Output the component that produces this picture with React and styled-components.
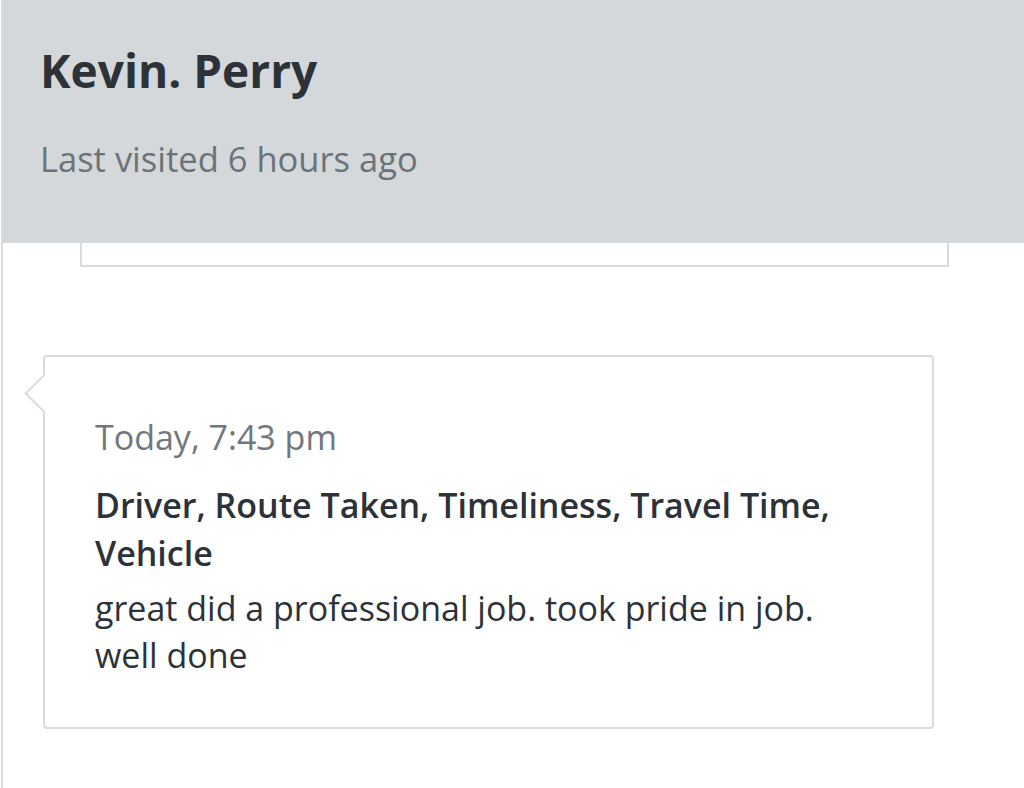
import styled, { createGlobalStyle } from 'styled-components'

const GlobalStyle = createGlobalStyle`
  html, body {
    margin: 0;
    padding: 0;
    background: #ffffff;
  }
  body {
    font-family: "Open Sans", Lato, Arial, sans-serif;
    -webkit-font-smoothing: antialiased;
  }
`

const Page = styled.div`
  min-height: 788px;
  margin-left: 1px;
  border-left: 2px solid #d9dcdf;
  overflow: hidden;
`

const Header = styled.header`
  height: 243px;
  margin-left: -3px;
  background-color: #d4d8db;
  padding: 40px 0 0 40px;
  box-sizing: border-box;
`

const Name = styled.h1`
  margin: 0;
  font-size: 46px;
  line-height: 60px;
  font-weight: 700;
  color: #2d3239;
`

const Visited = styled.p`
  margin: 37px 0 0;
  font-size: 34.5px;
  line-height: 44px;
  color: #6c7279;
`

const CardStub = styled.div`
  height: 24px;
  margin: 0 75px 0 77px;
  border: 2px solid #d9dcdf;
  border-top: none;
  box-sizing: border-box;
`

const Card = styled.div`
  position: relative;
  margin: 88px 0 0 40px;
  width: 891px;
  height: 374px;
  box-sizing: border-box;
  padding: 58px 70px 0 50px;
  border: 2px solid #d9dcdf;
  border-radius: 4px;
  background: #ffffff;

  &::before {
    content: '';
    position: absolute;
    left: -15.5px;
    top: 22.5px;
    width: 27px;
    height: 27px;
    box-sizing: border-box;
    background: #ffffff;
    border-left: 2px solid #d9dcdf;
    border-bottom: 2px solid #d9dcdf;
    transform: rotate(45deg);
  }
`

const Time = styled.div`
  font-size: 34px;
  line-height: 44px;
  color: #72777e;
`

const Tags = styled.div`
  margin-top: 22px;
  font-size: 34px;
  line-height: 48px;
  font-weight: 600;
  color: #2d3239;
`

const Comment = styled.p`
  margin: 8px 0 0;
  font-size: 34px;
  line-height: 47px;
  color: #2d3239;
`

export default function App() {
  return (
    <>
      <GlobalStyle />
      <Page>
        <Header>
          <Name>Kevin. Perry</Name>
          <Visited>Last visited 6 hours ago</Visited>
        </Header>
        <CardStub />
        <Card>
          <Time>Today, 7:43 pm</Time>
          <Tags>Driver, Route Taken, Timeliness, Travel Time, Vehicle</Tags>
          <Comment>great did a professional job. took pride in job. well done</Comment>
        </Card>
      </Page>
    </>
  )
}
